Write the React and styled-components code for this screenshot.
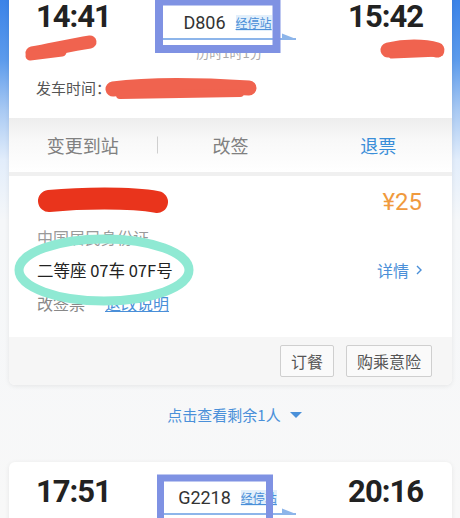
import React from "react";
import styled, { createGlobalStyle } from "styled-components";

const GlobalStyle = createGlobalStyle`
  html, body { margin: 0; padding: 0; }
  body {
    width: 460px;
    height: 518px;
    overflow: hidden;
    font-family: Roboto, "Noto Sans CJK SC", sans-serif;
    background: linear-gradient(180deg, #3b83e8 0px, #5c9bec 60px, #a8c9f3 110px, #e2edfb 160px, #f5f7f9 220px, #f8f8f8 100%);
  }
`;

const Page = styled.div`
  position: relative;
  width: 460px;
  height: 518px;
  overflow: hidden;
  box-sizing: border-box;
  padding: 0 8px 0 9px;
`;

const Card = styled.section`
  margin-top: ${(p) => p.$offset}px;
  background: #fff;
  border-radius: 6px;
  box-shadow: 0 1px 5px rgba(0, 0, 0, 0.08);
  overflow: hidden;
`;

const Header = styled.div`
  padding: 14px 29px 20px 27px;
`;

const TimesRow = styled.div`
  display: grid;
  grid-template-columns: 1fr auto 1fr;
  min-height: 64px;
`;

const TimeCol = styled.div`
  display: flex;
  flex-direction: column;
  align-items: ${(p) => (p.$right ? "flex-end" : "flex-start")};
`;

const Time = styled.div`
  font-family: Roboto, "Liberation Sans", sans-serif;
  font-weight: 700;
  font-size: 31px;
  line-height: 31px;
  letter-spacing: -1px;
  color: #222;
`;

const CenterCol = styled.div`
  width: 133px;
  display: flex;
  flex-direction: column;
  align-items: center;
  padding-top: 12px;
`;

const TrainRow = styled.div`
  display: flex;
  align-items: center;
  gap: 10px;
  line-height: 20px;
  margin-right: 4px;
`;

const TrainNo = styled.span`
  font-family: Roboto, "Liberation Sans", sans-serif;
  font-size: 18px;
  color: #333;
`;

const StopLink = styled.span`
  font-family: "Noto Sans CJK SC", sans-serif;
  font-size: 12px;
  line-height: 16px;
  color: #4a8fd8;
  text-decoration: underline;
  background: #e2effb;
`;

const Arrow = styled.svg`
  display: block;
`;

const Duration = styled.div`
  margin-top: 4px;
  font-family: "Noto Sans CJK SC", sans-serif;
  font-size: 13px;
  line-height: 16px;
  color: #a9a9a9;
`;

const DepartRow = styled.div`
  margin-top: 13px;
  font-family: "Noto Sans CJK SC", sans-serif;
  font-size: 15px;
  line-height: 20px;
  color: #555;
`;

const ActionBar = styled.div`
  display: grid;
  grid-template-columns: repeat(3, 1fr);
  height: 54px;
  background: linear-gradient(180deg, #ededed 0%, #f8f8f8 40%, #fff 100%);
`;

const ActionItem = styled.div`
  position: relative;
  display: flex;
  align-items: center;
  justify-content: center;
  font-family: "Noto Sans CJK SC", sans-serif;
  font-size: 18px;
  color: ${(p) => (p.$primary ? "#3a8ed8" : "#808080")};
  & + &::before {
    content: "";
    position: absolute;
    left: 0;
    top: 50%;
    width: 1px;
    height: 17px;
    transform: translateY(-50%);
    background: #cfcfcf;
  }
`;

const Divider = styled.div`
  height: 4px;
  background: #f0f0f0;
`;

const Passenger = styled.div`
  padding: 12px 30px 22px 28px;
  font-family: "Noto Sans CJK SC", sans-serif;
`;

const Row = styled.div`
  display: flex;
  align-items: center;
  justify-content: ${(p) => (p.$spread ? "space-between" : "flex-start")};
  gap: ${(p) => p.$gap || 0}px;
  height: ${(p) => p.$h || 24}px;
  margin-top: ${(p) => p.$mt || 0}px;
`;

const Price = styled.span`
  font-family: Roboto, "Liberation Sans", sans-serif;
  font-size: 24px;
  color: #f09a3e;
`;

const Text = styled.span`
  font-size: ${(p) => p.$size || 16}px;
  color: ${(p) => p.$color || "#222"};
  text-decoration: ${(p) => (p.$underline ? "underline" : "none")};
  white-space: pre;
`;

const DetailLink = styled.span`
  display: flex;
  align-items: center;
  gap: 7px;
  font-size: 16px;
  color: #4a8fd8;
`;

const Footer = styled.div`
  height: 48px;
  box-sizing: border-box;
  background: #f6f6f6;
  display: flex;
  justify-content: flex-end;
  align-items: flex-start;
  gap: 12px;
  padding: 8px 20px 0 0;
`;

const Button = styled.button`
  height: 32px;
  padding: 0 10px;
  border: 1px solid #cfcfcf;
  border-radius: 2px;
  background: #fafafa;
  font-family: "Noto Sans CJK SC", sans-serif;
  font-size: 16px;
  color: #555;
`;

const Expand = styled.div`
  margin-top: 20px;
  display: flex;
  justify-content: center;
  align-items: center;
  gap: 9px;
  line-height: 20px;
  font-family: "Noto Sans CJK SC", sans-serif;
  font-size: 15px;
  color: #4a90d9;
  padding-left: 8px;
`;

const Overlay = styled.svg`
  position: absolute;
  left: 0;
  top: 0;
  pointer-events: none;
`;

function TrainHeader({ dep, arr, no, depart }) {
  return (
    <Header>
      <TimesRow>
        <TimeCol>
          <Time>{dep}</Time>
        </TimeCol>
        <CenterCol>
          <TrainRow>
            <TrainNo>{no}</TrainNo>
            <StopLink>经停站</StopLink>
          </TrainRow>
          <Arrow width="133" height="8" viewBox="0 0 133 8">
            <line x1="0" y1="6" x2="133" y2="6" stroke="#8db5ea" strokeWidth="2" />
            <polygon points="119,0.5 133,6 119,6" fill="#8db5ea" />
          </Arrow>
          <Duration>历时1时1分</Duration>
        </CenterCol>
        <TimeCol $right>
          <Time>{arr}</Time>
        </TimeCol>
      </TimesRow>
      {depart && <DepartRow>发车时间：</DepartRow>}
    </Header>
  );
}

export default function App() {
  return (
    <>
      <GlobalStyle />
      <Page>
        <Card $offset={-13}>
          <TrainHeader dep="14:41" arr="15:42" no="D806" depart />
          <ActionBar>
            <ActionItem>变更到站</ActionItem>
            <ActionItem>改签</ActionItem>
            <ActionItem $primary>退票</ActionItem>
          </ActionBar>
          <Divider />
          <Passenger>
            <Row $spread $h={28}>
              <span />
              <Price>¥25</Price>
            </Row>
            <Row $mt={9}>
              <Text $color="#9a9a9a">中国居民身份证</Text>
            </Row>
            <Row $spread $mt={9}>
              <Text $size={16.5}>二等座 07车 07F号</Text>
              <DetailLink>
                详情
                <svg width="6" height="10" viewBox="0 0 6 10">
                  <polyline points="1,1 5,5 1,9" fill="none" stroke="#4a8fd8" strokeWidth="1.4" />
                </svg>
              </DetailLink>
            </Row>
            <Row $gap={20} $mt={9}>
              <Text $color="#888">改签票</Text>
              <Text $color="#4a8fd8" $underline>退改说明</Text>
            </Row>
          </Passenger>
          <Footer>
            <Button>订餐</Button>
            <Button>购乘意险</Button>
          </Footer>
        </Card>
        <Expand>
          点击查看剩余1人
          <svg width="12" height="6" viewBox="0 0 12 6">
            <polygon points="0,0 12,0 6,6" fill="#4a90d9" />
          </svg>
        </Expand>
        <Card $offset={37}>
          <TrainHeader dep="17:51" arr="20:16" no="G2218" />
        </Card>
        <Overlay width="460" height="518" viewBox="0 0 460 518">
          <g fill="none" strokeLinecap="round" strokeLinejoin="round">
            <path d="M32 53 C50 50 70 45 90 42" stroke="#f0634f" strokeWidth="13" />
            <path d="M30 56 L62 52" stroke="#f0634f" strokeWidth="9" />
            <path d="M388 50 C405 46 424 46 437 50" stroke="#f0634f" strokeWidth="15" />
            <path d="M392 55 L440 53" stroke="#f0634f" strokeWidth="7" />
            <path d="M113 89 C150 84 200 85 249 88" stroke="#f0634f" strokeWidth="15" />
            <path d="M120 95 L240 93" stroke="#f0634f" strokeWidth="8" />
            <path d="M49 201 C80 198 130 197 157 202" stroke="#e9341c" strokeWidth="22" />
            <ellipse cx="104" cy="270" rx="85" ry="31" stroke="#8fe9d3" strokeWidth="9" />
            <rect x="159" y="1.5" width="117.5" height="47.5" stroke="#7f92e3" strokeWidth="8" strokeLinecap="butt" strokeLinejoin="miter" />
            <rect x="160.5" y="478" width="109" height="60" stroke="#7f92e3" strokeWidth="7" strokeLinecap="butt" strokeLinejoin="miter" />
          </g>
        </Overlay>
      </Page>
    </>
  );
}
